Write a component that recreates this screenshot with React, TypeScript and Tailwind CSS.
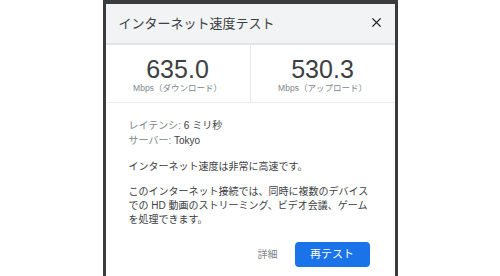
export default function App() {
  return (
    <div className="flex h-[276px] w-full justify-center overflow-hidden bg-white font-['Liberation_Sans','Noto_Sans_CJK_JP',sans-serif]">
      <div className="flex h-full w-[295px] flex-col border-x-[3px] border-t-[4px] border-[#3b3b3b] bg-white">
        {/* ヘッダー */}
        <div className="flex h-[41px] shrink-0 items-center justify-between border-b-2 border-[#e3e4e6] bg-[#f1f3f4] pl-[13px] pr-[13px]">
          <span className="text-[13px] text-[#3c4043]">インターネット速度テスト</span>
          <svg width="11" height="11" viewBox="0 0 12 12" className="mb-[2px]">
            <path d="M1.5 1.5 L10.5 10.5 M10.5 1.5 L1.5 10.5" stroke="#202124" strokeWidth="1.5" />
          </svg>
        </div>

        {/* 速度 */}
        <div className="flex h-[58px] shrink-0 border-b border-[#ececec]">
          <div className="flex flex-1 flex-col items-center border-r border-[#e6e6e6] pt-[11px]">
            <span className="text-[25px] leading-[26px] text-[#3c4043]">635.0</span>
            <span className="mt-[1px] text-[8.5px] leading-[10px] text-[#80868b]">Mbps（ダウンロード）</span>
          </div>
          <div className="flex flex-1 flex-col items-center pt-[11px]">
            <span className="text-[25px] leading-[26px] text-[#3c4043]">530.3</span>
            <span className="mt-[1px] text-[8.5px] leading-[10px] text-[#80868b]">Mbps（アップロード）</span>
          </div>
        </div>

        {/* 詳細 */}
        <div className="flex flex-col px-[23px] pt-[15px] text-[10px] leading-[15px] text-[#3c4043]">
          <div>
            <span className="text-[#80868b]">レイテンシ: </span>6 ミリ秒
          </div>
          <div>
            <span className="text-[#80868b]">サーバー: </span>Tokyo
          </div>
          <p className="mt-[11px]">インターネット速度は非常に高速です。</p>
          <p className="mt-[11px] leading-[14px]">
            このインターネット接続では、同時に複数のデバイス
            <br />
            での HD 動画のストリーミング、ビデオ会議、ゲーム
            <br />
            を処理できます。
          </p>
          <div className="mt-[15px] flex items-center justify-end gap-[17px] pr-[2px]">
            <span className="text-[#80868b]">詳細</span>
            <button className="h-[25px] w-[75px] rounded-[4px] bg-[#1a73e8] text-[11px] text-white">再テスト</button>
          </div>
        </div>
      </div>
    </div>
  );
}
